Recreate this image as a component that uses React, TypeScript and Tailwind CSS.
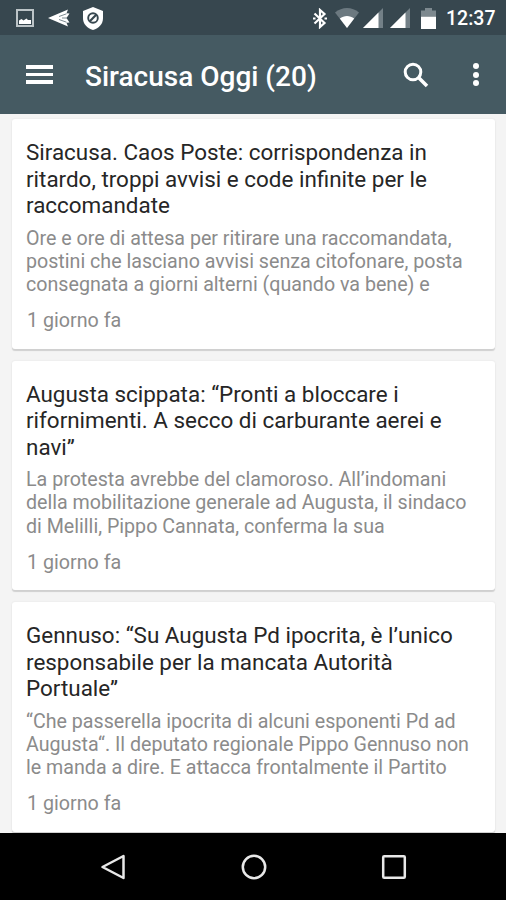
type Article = {
  title: string[];
  excerpt: string[];
  age: string;
};

const articles: Article[] = [
  {
    title: ['Siracusa. Caos Poste: corrispondenza in', 'ritardo, troppi avvisi e code infinite per le', 'raccomandate'],
    excerpt: [
      'Ore e ore di attesa per ritirare una raccomandata,',
      'postini che lasciano avvisi senza citofonare, posta',
      'consegnata a giorni alterni (quando va bene) e',
    ],
    age: '1 giorno fa',
  },
  {
    title: ['Augusta scippata: “Pronti a bloccare i', 'rifornimenti. A secco di carburante aerei e', 'navi”'],
    excerpt: [
      'La protesta avrebbe del clamoroso. All’indomani',
      'della mobilitazione generale ad Augusta, il sindaco',
      'di Melilli, Pippo Cannata, conferma la sua',
    ],
    age: '1 giorno fa',
  },
  {
    title: ['Gennuso: “Su Augusta Pd ipocrita, è l’unico', 'responsabile per la mancata Autorità', 'Portuale”'],
    excerpt: [
      '“Che passerella ipocrita di alcuni esponenti Pd ad',
      'Augusta“. Il deputato regionale Pippo Gennuso non',
      'le manda a dire. E attacca frontalmente il Partito',
    ],
    age: '1 giorno fa',
  },
];

function SignalIcon({ className }: { className?: string }) {
  return (
    <svg viewBox="0 0 20 20" className={`h-5 w-5 ${className ?? ''}`}>
      <path d="M0 20L20 0v20z" fill="#738087" />
      <path d="M0 20L15.500 4.500v15.500z" fill="#fff" />
    </svg>
  );
}

function StatusBar() {
  return (
    <div className="flex h-[35px] shrink-0 items-center bg-[#37474f] pl-4 pr-[11px] pt-px text-white">
      {/* Notifications */}
      <svg viewBox="0 0 18 18" className="h-[18px] w-[18px]">
        <rect x="1" y="1" width="16" height="16" fill="none" stroke="#bcc4c7" strokeWidth="2" />
        <path d="M3 15v-3.500l2.500-1.500 2 1.500 3-2 1.500 1.500 3 0v4z" fill="#fff" />
      </svg>
      <svg viewBox="0 0 22 18" className="ml-[14px] h-[18px] w-[22px]">
        <path d="M0 9L20 .5l-1.500 3.800 3 .2-3 4.500 3 4.500-3 .2 1.500 3.800z" fill="#fff" />
        <path d="M11 7.500l7.500-2.700M11 10.500l7.500 2.700M14 9h5" stroke="#7d8b91" strokeWidth="1" />
      </svg>
      <svg viewBox="0 0 20 23" className="ml-[13px] h-[23px] w-5">
        <path d="M10 0l10 4v7c0 6-4 10-10 12C4 21 0 17 0 11V4z" fill="#fff" />
        <circle cx="10" cy="11" r="4.800" fill="none" stroke="#37474f" strokeWidth="1.900" />
        <path d="M6.800 14.200l6.400-6.400" stroke="#37474f" strokeWidth="2.200" />
      </svg>

      {/* System state */}
      <div className="ml-auto flex items-center">
        <svg viewBox="0 0 14 21" className="h-[21px] w-3.5" fill="none" stroke="#fff" strokeWidth="2.200">
          <path d="M1.500 5.500l10 9.500L7 19V2l4.500 4-10 9.500" />
          <path d="M0 10.500h2.500M11.500 10.500H14" strokeWidth="2" />
        </svg>
        <svg viewBox="0 0 24 20" className="ml-2 h-5 w-6">
          <path d="M12 20L0 4.500C7-1.500 17-1.500 24 4.500z" fill="#6c7980" />
          <path d="M12 20L4.800 10.500C9 7 15 7 19.200 10.500z" fill="#fff" />
        </svg>
        <SignalIcon className="ml-1" />
        <SignalIcon className="ml-[7px]" />
        <svg viewBox="0 0 15 21" className="ml-[11px] h-[21px] w-[15px]">
          <path d="M0 2.500h4V0h7v2.500h4V8H0z" fill="#7d898f" />
          <path d="M0 8.500h15V21H0z" fill="#fff" />
        </svg>
        <span className="ml-[10px] w-[49px] whitespace-nowrap pt-0.5 text-[19.500px] font-medium leading-5">12:37</span>
      </div>
    </div>
  );
}

function AppBar() {
  return (
    <header className="flex h-[79px] shrink-0 items-center bg-[#455a62] pl-[26px] pr-[27px] text-white">
      <button type="button" aria-label="Menu" className="flex w-[27px] flex-col gap-1">
        <span className="h-[3.500px] bg-white" />
        <span className="h-[3.500px] bg-white" />
        <span className="h-[3.500px] bg-white" />
      </button>
      <h1 className="ml-8 whitespace-nowrap pt-1 text-[28px] font-medium leading-8">Siracusa Oggi (20)</h1>
      <button type="button" aria-label="Cerca" className="ml-auto">
        <svg viewBox="0 0 26 26" className="h-[26px] w-[26px]" fill="none" stroke="#fff" strokeWidth="3">
          <circle cx="10" cy="10" r="7.800" />
          <path d="M15.500 15.500l8.500 8.500" strokeWidth="3.500" />
        </svg>
      </button>
      <button type="button" aria-label="Altro" className="ml-11 flex flex-col gap-[2.500px]">
        <span className="h-1.5 w-1.5 rounded-full bg-white" />
        <span className="h-1.5 w-1.5 rounded-full bg-white" />
        <span className="h-1.5 w-1.5 rounded-full bg-white" />
      </button>
    </header>
  );
}

function ArticleCard({ title, excerpt, age }: Article) {
  return (
    <article className="h-[229.500px] shrink-0 rounded-[3px] bg-white pl-3.5 pt-5 shadow-[0_2px_1px_#d0d0d0,0_0_2px_#e0e0e0]">
      <h2 className="text-[22.430px] leading-[26.600px] text-[#262626]">
        {title.map((line) => (
          <span key={line} className="block whitespace-nowrap">{line}</span>
        ))}
      </h2>
      <p className="mt-2 text-[19.650px] leading-[23.200px] text-[#8b8b8b]">
        {excerpt.map((line) => (
          <span key={line} className="block whitespace-nowrap">{line}</span>
        ))}
      </p>
      <p className="mt-[13px] pl-px text-[19.700px] leading-[23px] text-[#8b8b8b]">{age}</p>
    </article>
  );
}

function NavigationBar() {
  return (
    <nav className="flex h-[67px] shrink-0 items-center bg-black pl-[100px] pr-[99px] text-[#e8e8e8]">
      <svg viewBox="0 0 26 26" className="h-[26px] w-[26px]" fill="none" stroke="currentColor" strokeWidth="2.500" strokeLinejoin="round">
        <path d="M2.500 13L23.500 2v22z" />
      </svg>
      <svg viewBox="0 0 26 26" className="ml-auto h-[26px] w-[26px]" fill="none" stroke="currentColor" strokeWidth="2.500">
        <circle cx="13" cy="13" r="11.200" />
      </svg>
      <svg viewBox="0 0 26 26" className="ml-auto h-[26px] w-[26px]" fill="none" stroke="currentColor" strokeWidth="2.500">
        <rect x="2.200" y="2.200" width="21.600" height="21.600" rx="1" />
      </svg>
    </nav>
  );
}

export default function App() {
  return (
    <div className="flex h-[900px] w-[506px] flex-col overflow-hidden bg-[#f4f4f4] font-['Roboto',sans-serif]">
      <StatusBar />
      <AppBar />
      <main className="flex min-h-0 flex-1 flex-col gap-3 overflow-hidden pl-3 pr-[11px] pt-[5px]">
        {articles.map((article) => (
          <ArticleCard key={article.title[0]} {...article} />
        ))}
      </main>
      <NavigationBar />
    </div>
  );
}
